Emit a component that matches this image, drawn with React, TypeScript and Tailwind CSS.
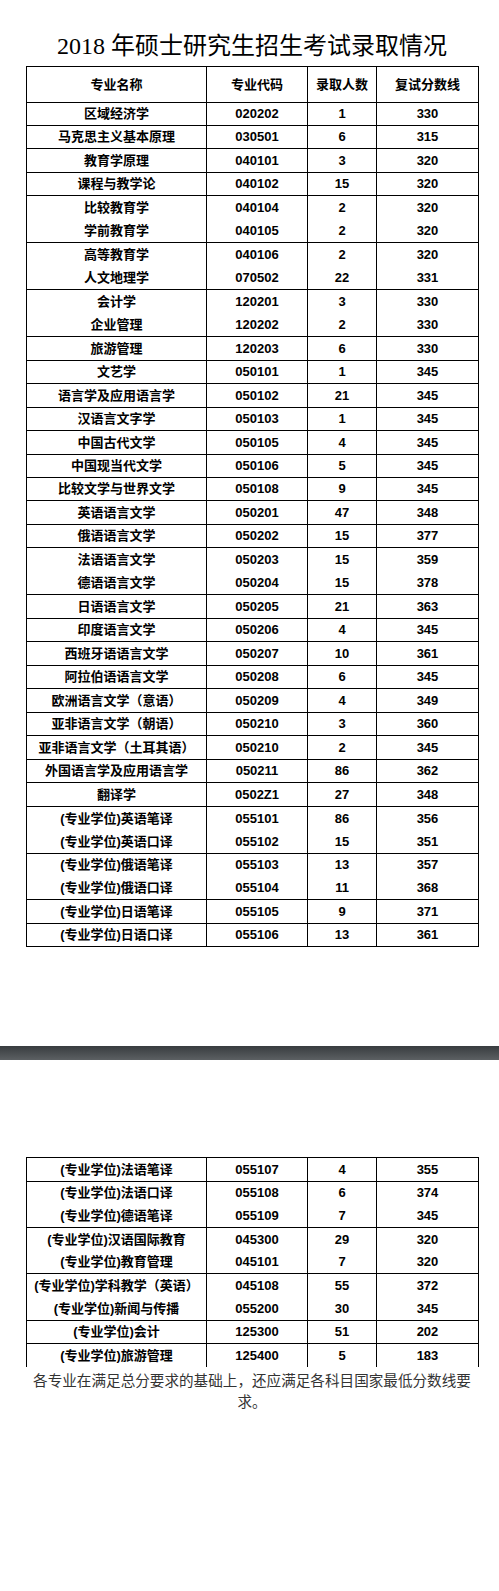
import React from "react";

type Row = [string, string, string, string, number];

const t1: Row[] = [
  ["区域经济学", "020202", "1", "330", 1],
  ["马克思主义基本原理", "030501", "6", "315", 1],
  ["教育学原理", "040101", "3", "320", 1],
  ["课程与教学论", "040102", "15", "320", 1],
  ["比较教育学", "040104", "2", "320", 0],
  ["学前教育学", "040105", "2", "320", 1],
  ["高等教育学", "040106", "2", "320", 0],
  ["人文地理学", "070502", "22", "331", 1],
  ["会计学", "120201", "3", "330", 0],
  ["企业管理", "120202", "2", "330", 1],
  ["旅游管理", "120203", "6", "330", 1],
  ["文艺学", "050101", "1", "345", 1],
  ["语言学及应用语言学", "050102", "21", "345", 1],
  ["汉语言文字学", "050103", "1", "345", 1],
  ["中国古代文学", "050105", "4", "345", 1],
  ["中国现当代文学", "050106", "5", "345", 1],
  ["比较文学与世界文学", "050108", "9", "345", 1],
  ["英语语言文学", "050201", "47", "348", 1],
  ["俄语语言文学", "050202", "15", "377", 1],
  ["法语语言文学", "050203", "15", "359", 0],
  ["德语语言文学", "050204", "15", "378", 1],
  ["日语语言文学", "050205", "21", "363", 1],
  ["印度语言文学", "050206", "4", "345", 1],
  ["西班牙语语言文学", "050207", "10", "361", 1],
  ["阿拉伯语语言文学", "050208", "6", "345", 1],
  ["欧洲语言文学（意语）", "050209", "4", "349", 1],
  ["亚非语言文学（朝语）", "050210", "3", "360", 1],
  ["亚非语言文学（土耳其语）", "050210", "2", "345", 1],
  ["外国语言学及应用语言学", "050211", "86", "362", 1],
  ["翻译学", "0502Z1", "27", "348", 1],
  ["(专业学位)英语笔译", "055101", "86", "356", 0],
  ["(专业学位)英语口译", "055102", "15", "351", 1],
  ["(专业学位)俄语笔译", "055103", "13", "357", 0],
  ["(专业学位)俄语口译", "055104", "11", "368", 1],
  ["(专业学位)日语笔译", "055105", "9", "371", 1],
  ["(专业学位)日语口译", "055106", "13", "361", 1],
];

const t2: Row[] = [
  ["(专业学位)法语笔译", "055107", "4", "355", 1],
  ["(专业学位)法语口译", "055108", "6", "374", 0],
  ["(专业学位)德语笔译", "055109", "7", "345", 1],
  ["(专业学位)汉语国际教育", "045300", "29", "320", 0],
  ["(专业学位)教育管理", "045101", "7", "320", 1],
  ["(专业学位)学科教学（英语）", "045108", "55", "372", 0],
  ["(专业学位)新闻与传播", "055200", "30", "345", 1],
  ["(专业学位)会计", "125300", "51", "202", 1],
  ["(专业学位)旅游管理", "125400", "5", "183", 0],
];

const cell =
  "flex items-center justify-center border-r border-black whitespace-nowrap";

function TRow({ r, h }: { r: Row; h: string }) {
  return (
    <div
      className={`grid grid-cols-[180px_101px_69px_102px] ${h} ${
        r[4] ? "border-b border-black" : ""
      }`}
    >
      <div className={cell}>{r[0]}</div>
      <div className={cell}>{r[1]}</div>
      <div className={cell}>{r[2]}</div>
      <div className={cell}>{r[3]}</div>
    </div>
  );
}

export default function App() {
  return (
    <div className="min-h-[1591px] w-[499px] bg-white text-black">
      <div className="h-[66px] pt-[28px] w-[452px] ml-[26px] text-center text-[24px] leading-[36px] [font-family:'Liberation_Serif','Noto_Sans_CJK_SC',serif]">
        2018 年硕士研究生招生考试录取情况
      </div>

      <div className="w-[453px] ml-[26px] border-t border-l border-black text-[13px] font-bold [font-family:'Liberation_Sans','Noto_Sans_CJK_SC',sans-serif]">
        <div className="grid grid-cols-[180px_101px_69px_102px] h-[35.5px] border-b border-black">
          <div className={cell}>专业名称</div>
          <div className={cell}>专业代码</div>
          <div className={cell}>录取人数</div>
          <div className={cell}>复试分数线</div>
        </div>
        {t1.map((r, i) => (
          <TRow key={i} r={r} h="h-[23.47px]" />
        ))}
      </div>

      <div className="mt-[99px] h-[14px] w-full bg-gradient-to-b from-[#383c3f] to-[#5c6063]" />

      <div className="mt-[97px] w-[453px] ml-[26px] border-t border-l border-black text-[13px] font-bold [font-family:'Liberation_Sans','Noto_Sans_CJK_SC',sans-serif]">
        {t2.map((r, i) => (
          <TRow key={i} r={r} h="h-[23.2px]" />
        ))}
      </div>

      <p className="w-[452px] ml-[26px] mt-[2px] text-center text-[14.6px] leading-[21px] text-[#333333] [font-family:'Noto_Sans_CJK_SC',sans-serif]">
        各专业在满足总分要求的基础上，还应满足各科目国家最低分数线要求。
      </p>
    </div>
  );
}
